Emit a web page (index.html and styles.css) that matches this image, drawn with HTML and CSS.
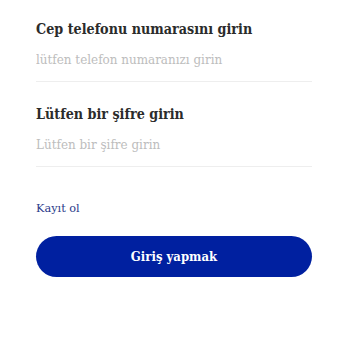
FILE: index.html
```html
<!DOCTYPE html>
<html lang="tr">
<head>
<meta charset="UTF-8">
<meta name="viewport" content="width=device-width, initial-scale=1.0">
<title>Giriş</title>
<link rel="stylesheet" href="styles.css">
</head>
<body>
<div class="login">
    <div class="field">
        <div class="field-label">Cep telefonu numarasını girin</div>
        <input class="field-input" type="tel" placeholder="lütfen telefon numaranızı girin">
    </div>
    <div class="field">
        <div class="field-label">Lütfen bir şifre girin</div>
        <input class="field-input" type="password" placeholder="Lütfen bir şifre girin">
    </div>
    <a class="register" href="#">Kayıt ol</a>
    <button class="btn-login">Giriş yapmak</button>
</div>
</body>
</html>
```

FILE: styles.css
```css
body {
    margin: 0;
    padding: 0;
    background-color: #fff;
    font-family: "DejaVu Serif", "Liberation Serif", serif;
    font-stretch: condensed;
}
.login {
    padding: 20px 38px 0 36px;
    display: flex;
    flex-direction: column;
}
.field {
    margin-bottom: 23px;
}
.field-label {
    font-size: 14.2px;
    font-weight: bold;
    color: #2b2b2b;
    line-height: 18px;
}
.field-input {
    display: block;
    width: 100%;
    box-sizing: border-box;
    border: none;
    border-bottom: 1px solid #eeeeee;
    outline: none;
    padding: 14px 0 14px;
    font-family: inherit;
    font-stretch: condensed;
    font-size: 13.3px;
    color: #333;
    background: transparent;
}
.field-input::placeholder {
    color: #bdbdbd;
}
.register {
    margin-top: 12px;
    font-size: 11.3px;
    font-stretch: normal;
    color: #2b3a8a;
    text-decoration: none;
    align-self: flex-start;
}
.btn-login {
    margin-top: 21px;
    height: 41px;
    border: none;
    border-radius: 21px;
    background-color: #0020a0;
    color: #fff;
    font-family: inherit;
    font-stretch: condensed;
    font-size: 13px;
    font-weight: bold;
    cursor: pointer;
}
```
